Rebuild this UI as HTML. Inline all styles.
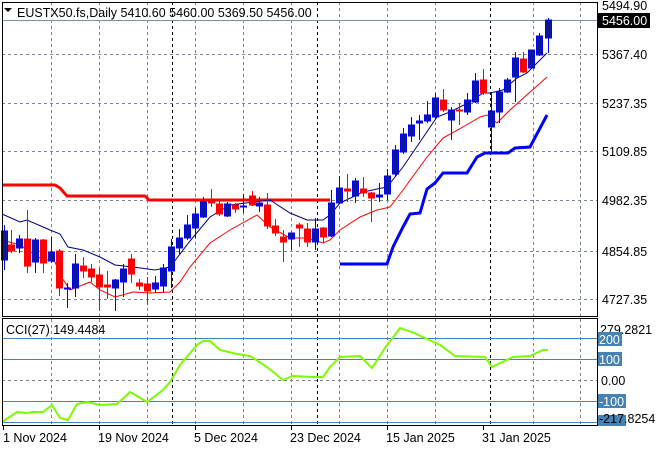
<!DOCTYPE html>
<html><head><meta charset="utf-8"><style>
body{margin:0;background:#fff;width:660px;height:450px;overflow:hidden;font-family:"Liberation Sans",sans-serif}
svg{display:block}
text{font-family:"Liberation Sans",sans-serif;font-size:12.5px;fill:#000}
</style></head><body>
<svg id="s" width="660" height="450" xmlns="http://www.w3.org/2000/svg">
<g stroke="#7d8590" stroke-dasharray="3,3" stroke-width="1">
<path d="M51.5 2V316M99.5 2V316M147.5 2V316M195.5 2V316M243.5 2V316M291.5 2V316M339.5 2V316M387.5 2V316M435.5 2V316M533.5 2V316M580.5 2V316"/>
<path d="M2 54.5H597M2 103.5H597M2 151.5H597M2 200.5H597M2 251.5H597M2 299.5H597"/>
<path d="M51.5 319V425M99.5 319V425M147.5 319V425M195.5 319V425M243.5 319V425M291.5 319V425M339.5 319V425M387.5 319V425M435.5 319V425M533.5 319V425M580.5 319V425M2 380.5H597"/>
</g>
<g stroke="#000" stroke-dasharray="3,3"><path d="M172.5 2V316M317.5 2V316M490.5 2V316M172.5 319V425M317.5 319V425M490.5 319V425"/></g>
<path d="M2 20.5H597" stroke="#7890a8"/>
<g stroke="#4682b4"><path d="M2 338.5H597M2 359.5H597M2 401.5H597M2 422.5H597"/></g>
<polyline fill="none" stroke="#ff0000" stroke-width="3" points="2,185 55,185 60,188 67,196 145,196 149,200 330,200"/>
<polyline fill="none" stroke="#0000ff" stroke-width="3" points="340,264 387,264 393,247 403,227 410,214 420,213 427,189 435,183 443,173 467,173 477,157 485,153 508,153 515,148 530,147 547,115"/>
<polyline fill="none" stroke="#000080" stroke-width="1" points="2,214 20,222 27,220 50,230 60,234 68,247 83,250 100,257 115,265 133,267 155,270 170,267 190,241 210,217 230,205 270,200 290,213 307,220 323,220 330,215 340,203 363,192 387,187 403,167 437,117 450,112 470,102 483,93 490,93 503,90 517,78 527,73 547,53"/>
<polyline fill="none" stroke="#ff0000" stroke-width="1" points="2,240 20,245 40,258 55,262 62,278 70,290 90,282 100,290 115,297 133,292 150,293 170,292 180,282 190,267 210,243 230,230 257,215 270,227 290,238 307,238 323,243 330,240 340,230 360,217 377,210 390,207 403,190 427,157 443,138 463,127 480,117 487,115 497,123 510,110 547,77"/>
<g id="c"></g>
<polyline fill="none" stroke="#7cfc00" stroke-width="2" points="2,422 17,412 27,413 33,412 43,412 52,405 60,418 68,420 77,404 87,402 100,405 117,404 130,392 147,402 163,390 170,382 180,365 197,345 203,341 210,341 220,350 237,354 250,356 267,367 283,380 293,376 313,377 323,377 330,367 340,357 360,356 372,368 385,348 400,328 412,332 425,338 440,345 455,356 485,357 492,367 513,357 530,356 543,350 548,350"/>
<rect x="2.5" y="2.5" width="595" height="314" fill="none" stroke="#000"/>
<rect x="2.5" y="318.5" width="595" height="107" fill="none" stroke="#000"/>
<path d="M4 8l4 4 4-4z" fill="#000"/>
<text x="17" y="17">EUSTX50.fs,Daily  5410.60 5460.00 5369.50 5456.00</text>
<text x="6" y="334">CCI(27) 149.4484</text>
<g>
<text x="602" y="10">5494.90</text>
<rect x="598" y="13" width="52" height="15" fill="#000"/><text x="602" y="25" style="fill:#fff">5456.00</text>
<text x="602" y="59">5367.40</text>
<text x="602" y="108">5237.35</text>
<text x="602" y="156">5109.85</text>
<text x="602" y="205">4982.35</text>
<text x="602" y="256">4854.85</text>
<text x="602" y="304">4727.35</text>
<text x="600" y="334">279.2821</text>
<rect x="598" y="332" width="24" height="14" fill="#4682b4"/><text x="599" y="344" style="fill:#fff">200</text>
<rect x="598" y="352" width="24" height="14" fill="#4682b4"/><text x="599" y="364" style="fill:#fff">100</text>
<text x="601" y="385">0.00</text>
<rect x="598" y="394" width="28" height="14" fill="#4682b4"/><text x="599" y="406" style="fill:#fff">-100</text>
<rect x="598" y="415" width="28" height="11" fill="#4682b4"/><text x="599" y="423">-217.8254</text>
</g>
<g><text x="3" y="442">1 Nov 2024</text><text x="98" y="442">19 Nov 2024</text><text x="194" y="442">5 Dec 2024</text><text x="290" y="442">23 Dec 2024</text><text x="386" y="442">15 Jan 2025</text><text x="482" y="442">31 Jan 2025</text></g>
<path d="M3.5 426v4M99.5 426v4M195.5 426v4M291.5 426v4M387.5 426v4M483.5 426v4" stroke="#000"/>
</svg>
<script>
var d=[[4,'b',231,260,225,270],[11,'r',245,251,230,253],[19,'b',239,248,235,253],[27,'r',239,266,210,273],[35,'b',240,262,238,273],[43,'r',240,263,239,273],[51,'b',252,261,237,263],[59,'r',251,288,249,296],[67,'b',288,289,283,308],[75,'b',264,288,254,297],[83,'r',266,271,257,278],[91,'r',269,277,264,282],[99,'r',275,287,268,311],[107,'r',285,287,271,299],[115,'b',280,288,279,311],[123,'b',269,282,264,297],[131,'r',259,274,254,283],[139,'r',283,286,279,290],[147,'r',284,291,277,305],[155,'b',283,289,276,293],[163,'b',268,286,264,292],[171,'b',247,271,239,288],[179,'b',238,248,229,254],[187,'b',225,238,215,240],[195,'b',214,228,208,238],[203,'b',202,217,197,218],[211,'r',202,203,189,207],[219,'r',204,214,201,216],[227,'b',204,216,202,217],[235,'r',205,209,203,213],[243,'b',206,207,194,213],[252,'r',196,205,191,206],[259,'b',203,206,197,212],[267,'r',205,226,193,229],[275,'r',226,233,219,236],[283,'r',237,242,230,262],[291,'b',233,239,233,250],[299,'r',225,228,223,247],[307,'r',229,242,223,247],[315,'b',229,242,218,250],[323,'r',228,237,227,243],[331,'b',203,236,190,237],[339,'b',188,203,176,204],[347,'r',189,191,174,202],[355,'b',181,196,178,203],[363,'r',189,193,177,197],[371,'r',193,198,192,222],[379,'b',195,197,183,202],[387,'b',176,194,169,200],[395,'b',150,174,145,176],[403,'b',134,152,128,154],[411,'b',125,136,117,142],[419,'b',121,123,115,140],[427,'b',115,121,101,123],[435,'b',98,117,93,120],[443,'r',100,110,89,112],[451,'b',110,120,107,140],[459,'r',110,111,103,125],[467,'b',100,112,93,115],[475,'b',81,102,73,103],[483,'r',80,93,69,95],[491,'b',111,127,92,153],[499,'b',92,112,88,123],[507,'b',80,92,78,93],[515,'b',58,77,52,102],[523,'r',59,72,52,73],[531,'b',50,68,50,69],[539,'b',36,55,33,56],[548,'b',20,38,18,53]];
var h='';d.forEach(function(a){var x=a[0],c=a[1]=='b',t=a[2],b=a[3];
h+='<line x1="'+(x+.5)+'" x2="'+(x+.5)+'" y1="'+a[4]+'" y2="'+a[5]+'" stroke="'+(c?'#0000ff':'#ff0000')+'"/>';
h+='<rect x="'+(x-2.5)+'" y="'+t+'" width="6" height="'+Math.max(1,b-t)+'" fill="'+(c?'#0a1896':'#ff0000')+'" stroke="'+(c?'#0000ff':'#ff0000')+'" stroke-width="1"/>';});
document.getElementById('c').innerHTML=h;
</script>
</body></html>
